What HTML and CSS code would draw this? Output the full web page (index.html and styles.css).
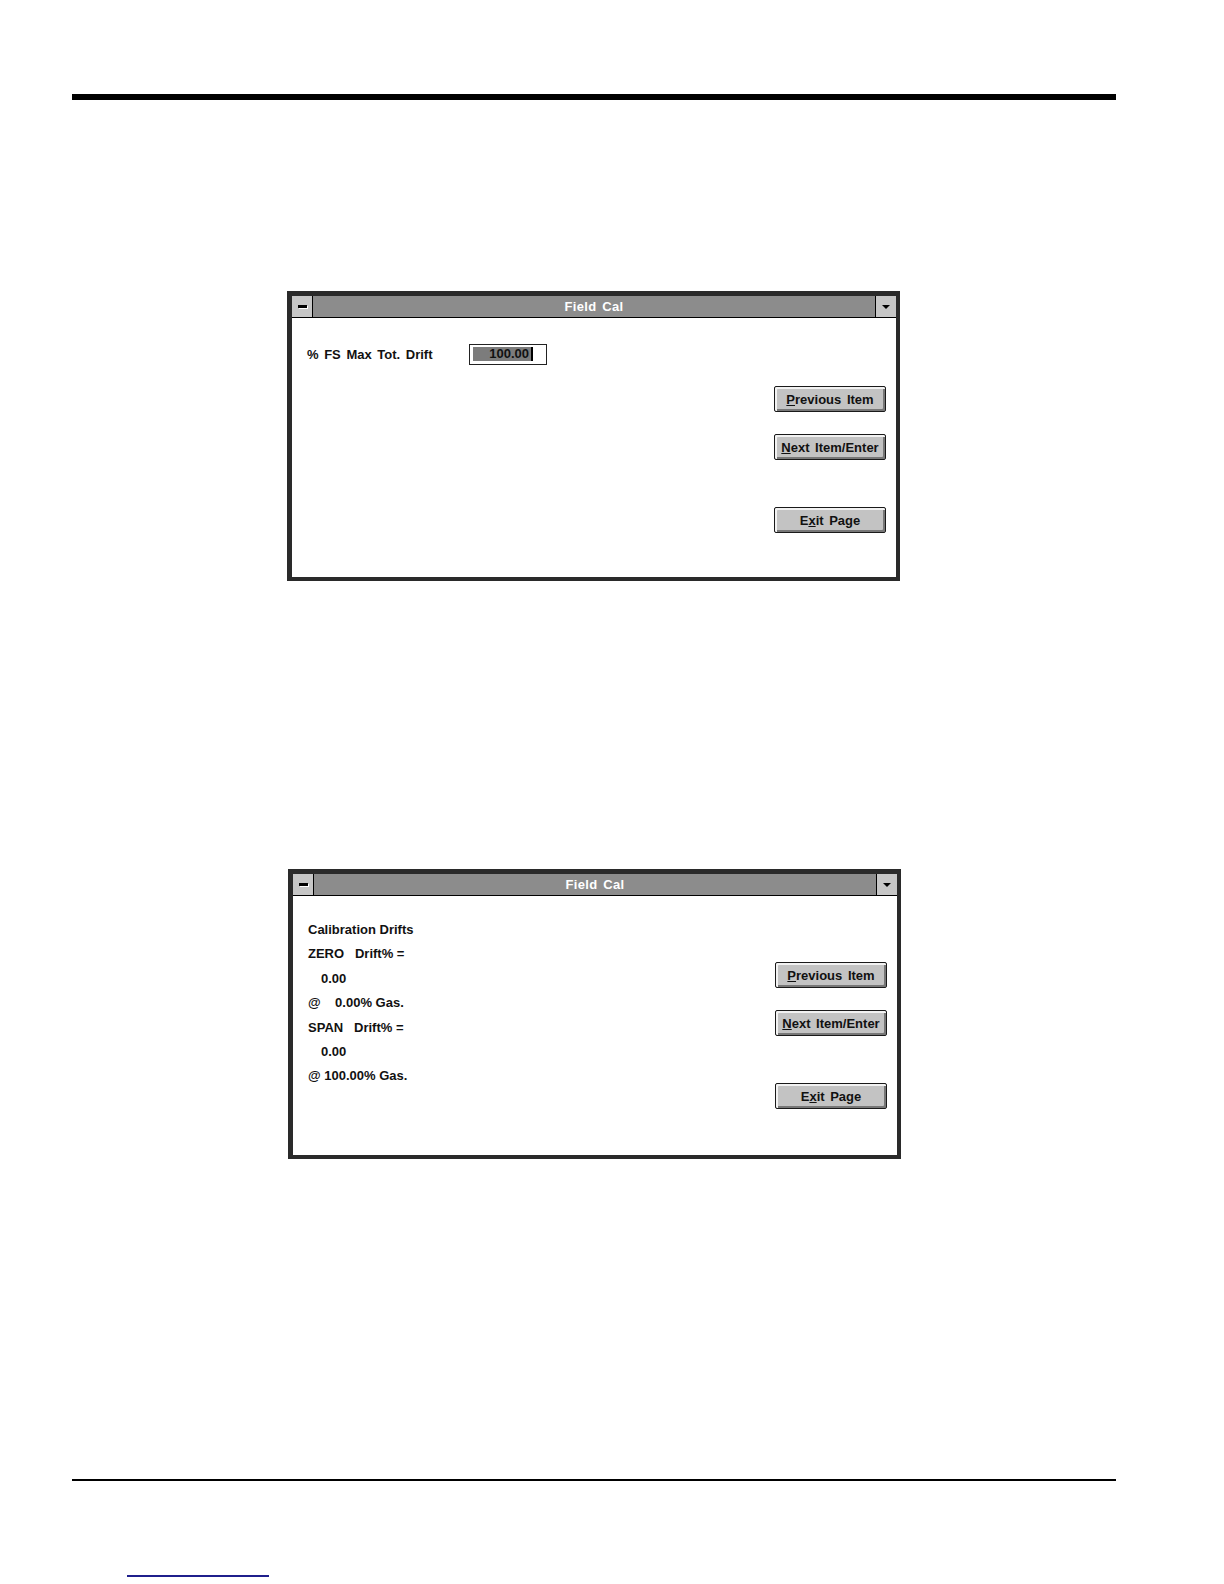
FILE: index.html
```html
<!DOCTYPE html>
<html lang="en">
<head>
<meta charset="utf-8">
<title>Field Cal</title>
<link rel="stylesheet" href="styles.css">
</head>
<body>
<div class="page">
  <div class="rule-top"></div>

  <div class="win win-first">
    <div class="titlebar">
      <div class="sysbtn"><span class="sysbar"></span></div>
      <div class="title">Field Cal</div>
      <div class="dnbtn"><span class="tri"></span></div>
    </div>
    <div class="client">
      <div class="fields">
        <div class="field-row">
          <span class="label">% FS Max Tot. Drift</span>
          <span class="input"><span class="sel">100.00</span><span class="caret"></span></span>
        </div>
      </div>
      <div class="buttons">
        <button class="btn"><u>P</u>revious Item</button>
        <button class="btn"><u>N</u>ext Item/Enter</button>
        <button class="btn btn-exit">E<u>x</u>it Page</button>
      </div>
    </div>
  </div>

  <div class="win win-second">
    <div class="titlebar">
      <div class="sysbtn"><span class="sysbar"></span></div>
      <div class="title">Field Cal</div>
      <div class="dnbtn"><span class="tri"></span></div>
    </div>
    <div class="client">
      <div class="fields lines">
        <div class="line">Calibration Drifts</div>
        <div class="line">ZERO   Drift% =</div>
        <div class="line indent">0.00</div>
        <div class="line">@    0.00% Gas.</div>
        <div class="line">SPAN   Drift% =</div>
        <div class="line indent">0.00</div>
        <div class="line">@ 100.00% Gas.</div>
      </div>
      <div class="buttons">
        <button class="btn"><u>P</u>revious Item</button>
        <button class="btn"><u>N</u>ext Item/Enter</button>
        <button class="btn btn-exit">E<u>x</u>it Page</button>
      </div>
    </div>
  </div>

  <div class="rule-bottom"></div>
  <div class="link-line"></div>
</div>
</body>
</html>
```
FILE: styles.css
```css
body {
  margin: 0;
  background: #fff;
  font-family: "Liberation Sans", Arial, sans-serif;
}

.page {
  width: 1224px;
  height: 1584px;
  overflow: hidden;
}

.rule-top {
  margin: 94px 0 0 72px;
  width: 1044px;
  height: 6px;
  background: #000;
}

.rule-bottom {
  margin: 320px 0 0 72px;
  width: 1044px;
  height: 2px;
  background: #000;
}

.link-line {
  margin: 94px 0 0 127px;
  width: 142px;
  height: 2px;
  background: #1f1f8c;
}

.win {
  box-sizing: border-box;
  width: 613px;
  height: 290px;
  border-style: solid;
  border-color: #2a2a2a;
  border-width: 5px 4px 4px 5px;
  background: #fff;
  display: flex;
  flex-direction: column;
}

.win-first {
  margin: 191px 0 0 287px;
}

.win-second {
  margin: 288px 0 0 288px;
}

.titlebar {
  height: 21px;
  border-bottom: 1px solid #000;
  display: flex;
  background: #8c8c8c;
  flex: none;
}

.sysbtn {
  width: 20px;
  border-right: 1px solid #000;
  background: #c6c6c6;
  display: flex;
  align-items: center;
  justify-content: center;
}

.sysbar {
  width: 9px;
  height: 3px;
  background: #000;
  box-shadow: 1px 1px 0 #fff;
}

.title {
  flex: 1;
  text-align: center;
  color: #fff;
  font-weight: bold;
  font-size: 13px;
  line-height: 21px;
  word-spacing: 2px;
  letter-spacing: 0.3px;
}

.dnbtn {
  width: 20px;
  border-left: 1px solid #000;
  background: #c6c6c6;
  display: flex;
  align-items: center;
  justify-content: center;
}

.tri {
  width: 0;
  height: 0;
  border-left: 4px solid transparent;
  border-right: 4px solid transparent;
  border-top: 4px solid #000;
}

.client {
  flex: 1;
  display: flex;
  padding: 0 10px 0 15px;
  color: #111;
  font-weight: bold;
  font-size: 13px;
}

.fields {
  flex: 1;
}

.win-first .fields {
  padding-top: 26px;
}

.field-row {
  display: flex;
  align-items: center;
  height: 21px;
}

.label {
  width: 162px;
  flex: none;
  word-spacing: 2px;
}

.input {
  box-sizing: border-box;
  width: 78px;
  height: 21px;
  border: 1px solid #222;
  display: flex;
  align-items: center;
  padding: 0 0 1px 3px;
  background: #fff;
}

.sel {
  box-sizing: border-box;
  width: 58px;
  height: 14px;
  background: #7c7c7c;
  text-align: right;
  line-height: 14px;
  padding-right: 2px;
  color: #111;
}

.caret {
  width: 2px;
  height: 14px;
  background: #000;
}

.lines {
  padding-top: 22px;
}

.line {
  height: 24.4px;
  line-height: 24.4px;
  white-space: pre;
}

.indent {
  padding-left: 13px;
}

.buttons {
  width: 112px;
  flex: none;
  display: flex;
  flex-direction: column;
}

.win-first .buttons {
  padding-top: 68px;
}

.win-second .buttons {
  padding-top: 66px;
}

.btn {
  box-sizing: border-box;
  width: 112px;
  height: 26px;
  margin: 0 0 22px 0;
  padding: 0;
  background: #c3c3c3;
  border: 1px solid #1a1a1a;
  border-radius: 2px;
  box-shadow: inset 2px 2px 0 #f2f2f2, inset -2px -2px 0 #777;
  font-family: "Liberation Sans", Arial, sans-serif;
  font-weight: bold;
  font-size: 13px;
  color: #111;
  text-align: center;
  word-spacing: 2px;
}

.btn-exit {
  margin-top: 25px;
}
```
